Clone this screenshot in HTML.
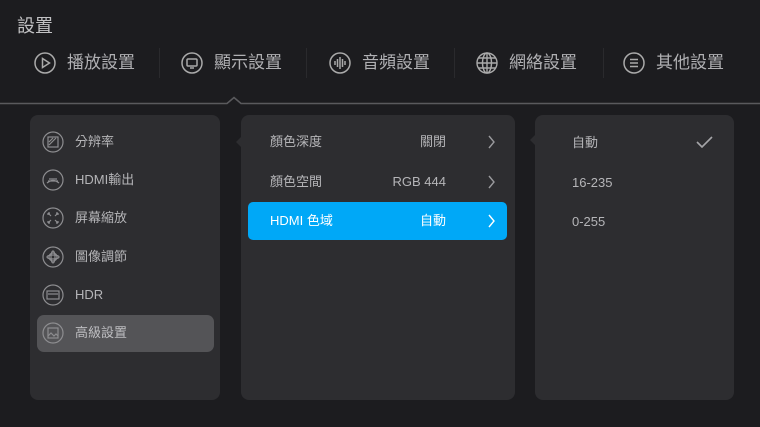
<!DOCTYPE html>
<html><head><meta charset="utf-8"><style>
*{margin:0;padding:0;box-sizing:border-box}
body{width:760px;height:427px;background:#1c1c1f;font-family:"Liberation Sans","Noto Sans CJK TC",sans-serif;position:relative;overflow:hidden;color:#b5b5b8}
.a{position:absolute}
.title{left:17px;top:12px;font-size:18px;color:#c2c2c4}
.tab{top:52px;font-size:17px;color:#b0b0b3;line-height:22px;display:flex;align-items:center}
.tab svg{margin-right:11px}
.div{top:48px;width:1px;height:30px;background:#2a2a2d}
.panel{background:#2d2d30;border-radius:8px}
.row{font-size:13px;line-height:16px}
</style></head><body>
<div class="a title">設置</div>
<div class="a tab" style="left:34px"><svg width="22" height="22" viewBox="0 0 22 22" fill="none" stroke="#aaa" stroke-width="1.5"><circle cx="11" cy="11" r="10"/><path d="M8.5 6.5v9l7-4.5z"/></svg>播放設置</div>
<div class="a div" style="left:159px"></div>
<div class="a tab" style="left:181px"><svg width="22" height="22" viewBox="0 0 22 22" fill="none" stroke="#aaa" stroke-width="1.5"><circle cx="11" cy="11" r="10"/><rect x="6" y="7" width="10" height="7" rx="1"/><path d="M9 16h4"/></svg>顯示設置</div>
<div class="a div" style="left:306px"></div>
<div class="a tab" style="left:329px"><svg width="22" height="22" viewBox="0 0 22 22" fill="none" stroke="#aaa" stroke-width="1.5"><circle cx="11" cy="11" r="10"/><path d="M6 9v4M8.5 7v8M11 5v12M13.5 7v8M16 9v4"/></svg>音頻設置</div>
<div class="a div" style="left:454px"></div>
<div class="a tab" style="left:476px"><svg width="22" height="22" viewBox="0 0 22 22" fill="none" stroke="#aaa" stroke-width="1.4"><circle cx="11" cy="11" r="10"/><ellipse cx="11" cy="11" rx="4.5" ry="10"/><path d="M11 1v20M1 11h20M2.5 6h17M2.5 16h17"/></svg>網絡設置</div>
<div class="a div" style="left:603px"></div>
<div class="a tab" style="left:623px"><svg width="22" height="22" viewBox="0 0 22 22" fill="none" stroke="#aaa" stroke-width="1.5"><circle cx="11" cy="11" r="10"/><path d="M7 7.5h8M7 11h8M7 14.5h8"/></svg>其他設置</div>
<svg class="a" style="left:0;top:95px" width="760" height="12"><path d="M0 8.5H227l7-6 7 6H760" fill="none" stroke="#5a5a5d" stroke-width="1.6"/></svg>

<div class="a panel" style="left:30px;top:115px;width:190px;height:285px"></div>
<div class="a" style="left:37px;top:315px;width:177px;height:37px;background:#545457;border-radius:7px"></div>
<div class="a panel" style="left:241px;top:115px;width:274px;height:285px"></div>
<div class="a" style="left:236px;top:137px;width:0;height:0;border-top:5px solid transparent;border-bottom:5px solid transparent;border-right:5px solid #2d2d30"></div>
<div class="a panel" style="left:535px;top:115px;width:199px;height:285px"></div>
<div class="a" style="left:530px;top:135px;width:0;height:0;border-top:5px solid transparent;border-bottom:5px solid transparent;border-right:5px solid #2d2d30"></div>

<svg class="a" style="left:42px;top:131px" width="22" height="220" viewBox="0 0 22 220" fill="none" stroke="#8d8d90" stroke-width="1.2">
<circle cx="11" cy="11" r="10"/><rect x="6" y="6" width="10" height="10"/><path d="M7 11l4-4M7 14l7-7"/>
<circle cx="11" cy="49" r="10"/><path d="M5 52q6-5 12 0M7 48h8M6 50h10"/>
<circle cx="11" cy="87" r="10"/><path d="M6 82l3 3M6 82h2M6 82v2M16 82l-3 3M16 82h-2M16 82v2M6 92l3-3M6 92h2M6 92v-2M16 92l-3-3M16 92h-2M16 92v-2"/>
<circle cx="11" cy="126" r="10"/><ellipse cx="11" cy="126" rx="2" ry="6"/><ellipse cx="11" cy="126" rx="6" ry="2"/><circle cx="11" cy="126" r="4"/>
<circle cx="11" cy="164" r="10"/><rect x="5" y="160" width="12" height="8"/><path d="M6 163h10"/>
<circle cx="11" cy="202" r="10"/><rect x="6" y="197" width="10" height="10"/><path d="M6 205l3-3 3 3 2-2 2 2"/>
</svg>
<div class="a row" style="left:75px;top:134px">分辨率</div>
<div class="a row" style="left:75px;top:172px">HDMI輸出</div>
<div class="a row" style="left:75px;top:210px">屏幕縮放</div>
<div class="a row" style="left:75px;top:249px">圖像調節</div>
<div class="a row" style="left:75px;top:287px">HDR</div>
<div class="a row" style="left:75px;top:325px;color:#bdbdc0">高級設置</div>

<div class="a" style="left:248px;top:202px;width:259px;height:38px;background:#00a8f7;border-radius:5px"></div>
<div class="a row" style="left:270px;top:134px">顏色深度</div>
<div class="a row" style="left:346px;top:134px;width:100px;text-align:right">關閉</div>
<div class="a row" style="left:270px;top:174px">顏色空間</div>
<div class="a row" style="left:346px;top:174px;width:100px;text-align:right">RGB 444</div>
<div class="a row" style="left:270px;top:213px;color:#fff">HDMI 色域</div>
<div class="a row" style="left:346px;top:213px;width:100px;text-align:right;color:#fff">自動</div>
<svg class="a" style="left:486px;top:134px" width="12" height="100" fill="none" stroke-width="1.4"><path d="M3 2l5 6-5 6M3 42l5 6-5 6" stroke="#9a9a9d"/><path d="M3 81l5 6-5 6" stroke="#fff"/></svg>

<div class="a row" style="left:572px;top:135px">自動</div>
<div class="a row" style="left:572px;top:175px">16-235</div>
<div class="a row" style="left:572px;top:214px">0-255</div>
<svg class="a" style="left:696px;top:136px" width="18" height="12" fill="none" stroke="#a5a5a8" stroke-width="1.6"><path d="M1 6l5 5 10-10"/></svg>
</body></html>
